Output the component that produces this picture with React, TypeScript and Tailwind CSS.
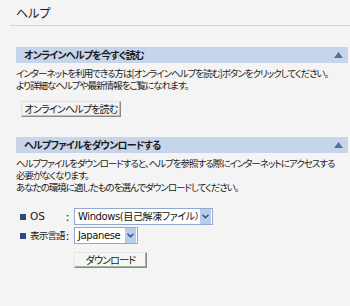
import React from "react";

const jp = "font-['Noto_Sans_CJK_JP',sans-serif] [font-feature-settings:'palt']";

const SectionBar = ({ title }: { title: string }) => (
  <div className="flex items-center justify-between h-[16px] bg-[#c6d5ea] pl-[8px] pr-[5px]">
    <span className="text-[10px] font-bold tracking-[-0.8px] text-[#1a1a1a] leading-none whitespace-nowrap">
      {title}
    </span>
    <svg width="9" height="6" viewBox="0 0 9 6">
      <polygon points="4.5,0 9,6 0,6" fill="#55709a" />
    </svg>
  </div>
);

const Select = ({ value, width }: { value: string; width: string }) => (
  <div className={`flex items-center h-[17px] border border-[#8fa9cf] bg-white overflow-hidden ${width}`}>
    <span className="flex-1 pl-[3px] text-[10px] leading-none text-[#111] whitespace-nowrap overflow-hidden font-['DejaVu_Sans','Noto_Sans_CJK_JP',sans-serif] tracking-[-0.4px]">
      {value}
    </span>
    <div className="flex items-center justify-center shrink-0 w-[11px] h-[15px] bg-[#b8cdea] mr-[1px]">
      <svg width="7" height="5" viewBox="0 0 7 5">
        <path d="M0.5 0.8 L3.5 3.8 L6.5 0.8" stroke="#2b4f8a" strokeWidth="1.4" fill="none" />
      </svg>
    </div>
  </div>
);

const Bullet = () => <span className="inline-block shrink-0 w-[6px] h-[6px] bg-[#2c4a7e]" />;

export default function App() {
  return (
    <div className={`w-[350px] h-[306px] bg-[#f4f4f4] text-[#1a1a1a] overflow-hidden ${jp}`}>
      <div className="pt-[6px] pl-[16px] h-[25px] text-[12px] leading-[14px]">ヘルプ</div>
      <div className="ml-[10px] h-[1px] bg-[#d4d4d4]" />

      <div className="ml-[16px] mr-[2px] mt-[21px]">
        <SectionBar title="オンラインヘルプを今すぐ読む" />
        <p className="mt-[4px] text-[9.5px] tracking-[-1px] leading-[12px] whitespace-nowrap">
          インターネットを利用できる方は[オンラインヘルプを読む]ボタンをクリックしてください。
          <br />
          より詳細なヘルプや最新情報をご覧になれます。
        </p>
        <button className="mt-[10px] ml-[5px] h-[16px] w-[100px] border border-[#8a8a8a] border-t-[#e0e0e0] border-l-[#e0e0e0] bg-[#f3f3f3] text-[10px] tracking-[-0.8px] leading-none whitespace-nowrap shadow-[inset_-1px_-1px_0_#c0c0c0]">
          オンラインヘルプを読む
        </button>

        <div className="mt-[19px]">
          <SectionBar title="ヘルプファイルをダウンロードする" />
        </div>
        <p className="mt-[4px] text-[9.5px] tracking-[-1px] leading-[12px] whitespace-nowrap">
          ヘルプファイルをダウンロードすると、ヘルプを参照する際にインターネットにアクセスする
          <br />
          必要がなくなります。
          <br />
          あなたの環境に適したものを選んでダウンロードしてください。
        </p>

        <div className="mt-[15px] ml-[4px] flex flex-col gap-[2px] leading-none">
          <div className="flex items-center">
            <Bullet />
            <span className="ml-[4px] w-[36px] text-[10.5px] font-['DejaVu_Sans',sans-serif]">OS</span>
            <span className="w-[8px] text-[11px]">:</span>
            <Select value="Windows(自己解凍ファイル）" width="w-[139px]" />
          </div>
          <div className="flex items-center">
            <Bullet />
            <span className="ml-[4px] w-[36px] text-[9.5px] tracking-[-0.8px] whitespace-nowrap">表示言語</span>
            <span className="w-[8px] text-[11px]">:</span>
            <Select value="Japanese" width="w-[64px]" />
          </div>
        </div>

        <button className="mt-[8px] ml-[58px] h-[16px] w-[73px] border border-[#8a8a8a] border-t-[#e6e6e6] border-l-[#e6e6e6] bg-[#f5f7f2] text-[10px] tracking-[-0.8px] leading-none whitespace-nowrap shadow-[inset_-1px_-1px_0_#9fb39a]">
          ダウンロード
        </button>
      </div>
    </div>
  );
}
